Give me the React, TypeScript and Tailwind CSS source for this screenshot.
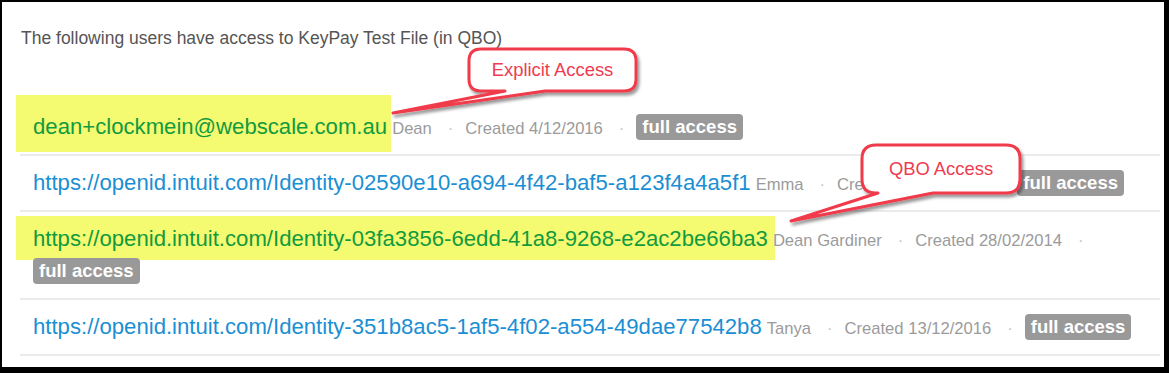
import React from "react";

type Row = {
  link: string;
  highlight?: boolean;
  name: string;
  created: string;
};

const rows: Row[] = [
  { link: "dean+clockmein@webscale.com.au", highlight: true, name: "Dean", created: "Created 4/12/2016" },
  { link: "https://openid.intuit.com/Identity-02590e10-a694-4f42-baf5-a123f4a4a5f1", name: "Emma", created: "Created 12/12/2016" },
  { link: "https://openid.intuit.com/Identity-03fa3856-6edd-41a8-9268-e2ac2be66ba3", highlight: true, name: "Dean Gardiner", created: "Created 28/02/2014" },
  { link: "https://openid.intuit.com/Identity-351b8ac5-1af5-4f02-a554-49dae77542b8", name: "Tanya", created: "Created 13/12/2016" },
];

function Dot() {
  return <span className="ml-[16px] mr-[12px] text-[16.6px] leading-[28px] text-[#c4c4c4]">·</span>;
}

export default function App() {
  return (
    <div className="relative w-[1169px] h-[373px] bg-black pl-[2px] pt-[2px] pr-[5px] pb-[6px] font-['Liberation_Sans',Arial,sans-serif] overflow-hidden">
      <div className="h-full bg-white pt-[26px]">
        <div className="pl-[19px] text-[17.5px] leading-[20px] text-[#555555]">
          The following users have access to KeyPay Test File (in QBO)
        </div>

        {/* highlighter annotations */}
        <div className="absolute left-[16px] top-[95px] w-[375px] h-[57px] bg-[#f4fb70]" />
        <div className="absolute left-[16px] top-[216px] w-[759px] h-[44px] bg-[#f4fb70]" />

        <div className="relative z-10 mt-[52px] ml-[18px] mr-[4px] flex flex-col">
          {rows.map((r, i) => (
            <div key={i} className="flex flex-wrap items-baseline border-b-2 border-[#ebebeb] pl-[13px] pt-[11px] pb-[11px]">
              <span className={"text-[22.15px] leading-[32px] " + (r.highlight ? "text-[#129a3f]" : "text-[#1b8fd3]")}>{r.link}</span>
              <span className="ml-[5px] text-[16.6px] leading-[28px] text-[#9b9b9b]">{r.name}</span>
              <Dot />
              <span className="text-[16.6px] leading-[28px] text-[#9b9b9b]">{r.created}</span>
              <Dot />
              <span className="self-center flex h-[32px] items-center">
                <span className="rounded-[4px] bg-[#999999] px-[6px] text-[18.5px] font-bold leading-[26px] text-white">
                  full access
                </span>
              </span>
            </div>
          ))}
        </div>
      </div>

      {/* callout shapes */}
      <svg className="absolute left-0 top-0 z-20" width="1169" height="373" viewBox="0 0 1169 373">
        <defs>
          <filter id="sh" x="-20%" y="-20%" width="140%" height="160%">
            <feDropShadow dx="2" dy="3" stdDeviation="1.6" floodColor="#000" floodOpacity="0.4" />
          </filter>
        </defs>
        <path
          d="M481 49 H624 Q636 49 636 61 V79 Q636 91 624 91 H545 L393 113 L505 91 H481 Q469 91 469 79 V61 Q469 49 481 49 Z"
          fill="#ffffff"
          stroke="#f03a4c"
          strokeWidth="3"
          strokeLinejoin="round"
          filter="url(#sh)"
        />
        <path
          d="M876 145 H1006 Q1020 145 1020 159 V179 Q1020 193 1006 193 H933 L791 221 L878 193 H876 Q862 193 862 179 V159 Q862 145 876 145 Z"
          fill="#ffffff"
          stroke="#f03a4c"
          strokeWidth="3"
          strokeLinejoin="round"
          filter="url(#sh)"
        />
      </svg>
      <div className="absolute z-30 left-[469px] top-[49px] w-[167px] h-[42px] flex items-center justify-center text-[18.4px] text-[#ef3b50]">
        Explicit Access
      </div>
      <div className="absolute z-30 left-[862px] top-[145px] w-[158px] h-[48px] flex items-center justify-center text-[18.4px] text-[#ef3b50]">
        QBO Access
      </div>
    </div>
  );
}
